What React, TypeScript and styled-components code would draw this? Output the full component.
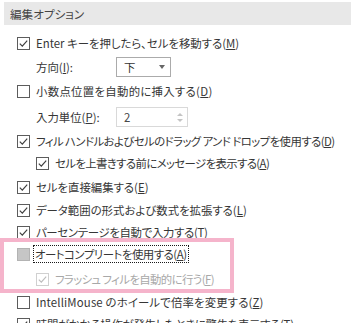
import React from "react";
import styled, { createGlobalStyle, css } from "styled-components";

const GlobalStyle = createGlobalStyle`
  html, body {
    margin: 0;
    padding: 0;
    background: #ffffff;
  }
  body {
    font-family: "Noto Sans CJK JP", "Noto Sans", sans-serif;
    font-feature-settings: "palt";
  }
`;

const Panel = styled.div`
  width: 351px;
  height: 323px;
  overflow: hidden;
  background: #ffffff;
  padding-top: 2px;
  box-sizing: border-box;
`;

// セクションの見出し
const Header = styled.div`
  margin-left: 4px;
  height: 23px;
  background: #e8e8e8;
  color: #444444;
  font-size: 11.6px;
  display: flex;
  align-items: center;
  padding-left: 6px;
`;

const Row = styled.div<{ $indent: number; $top: number }>`
  height: 20px;
  margin-top: ${(p) => p.$top}px;
  padding-left: ${(p) => p.$indent}px;
  display: flex;
  align-items: center;
  font-size: 11.4px;
  color: #363636;
  white-space: nowrap;

  & > svg {
    flex-shrink: 0;
  }
`;

// カタカナの多い行は少し詰める
const Text = styled.span<{
  $disabled?: boolean;
  $focused?: boolean;
  $tracking?: number;
}>`
  margin-left: 6px;
  line-height: 16px;
  letter-spacing: ${(p) => p.$tracking ?? 0}px;
  ${(p) =>
    p.$disabled &&
    css`
      color: #a8a8a8;
    `};
  ${(p) =>
    p.$focused &&
    css`
      outline: 1px dotted #1a1a1a;
      outline-offset: 0px;
      padding: 0 1px 0 1px;
      margin-left: 4px;
    `};
`;

const Label = styled.span`
  width: 80px;
  flex-shrink: 0;
  line-height: 16px;
`;

const Key = styled.span`
  text-decoration: underline;
  text-underline-offset: 1px;
`;

// ピンクの強調枠
const Highlight = styled.div`
  margin-left: 4px;
  width: 226px;
  height: 47px;
  outline: 4px solid #f5b4cb;
  padding-top: 2px;
  box-sizing: border-box;
`;

const Select = styled.div`
  width: 55px;
  height: 20px;
  box-sizing: border-box;
  border: 1px solid #ababab;
  display: flex;
  align-items: center;
  justify-content: space-between;
  padding: 0 5px 0 7px;
  color: #333333;
`;

const Arrow = styled.span`
  width: 0;
  height: 0;
  border-left: 3.5px solid transparent;
  border-right: 3.5px solid transparent;
  border-top: 4px solid #666666;
`;

const Spin = styled.div`
  width: 72px;
  height: 20px;
  box-sizing: border-box;
  border: 1px solid #d9d9d9;
  display: flex;
  align-items: center;
  justify-content: space-between;
  padding: 0 4px 0 7px;
  color: #4a4a4a;
`;

const SpinArrows = styled.div`
  display: flex;
  flex-direction: column;
  gap: 3px;
`;

const SpinArrow = styled.span<{ $up?: boolean }>`
  width: 0;
  height: 0;
  border-left: 3px solid transparent;
  border-right: 3px solid transparent;
  ${(p) =>
    p.$up
      ? css`
          border-bottom: 3px solid #c4c4c4;
        `
      : css`
          border-top: 3px solid #c4c4c4;
        `};
`;

type BoxState = "on" | "off" | "gray" | "disabled";

const CheckBox = ({ state }: { state: BoxState }) => {
  const stroke =
    state === "gray" ? "#b3b3b3" : state === "disabled" ? "#d0d0d0" : "#5c5c5c";
  const fill = state === "gray" ? "#c6c6c6" : "#ffffff";
  return (
    <svg width="13" height="13" viewBox="0 0 13 13">
      <rect x="0.5" y="0.5" width="12" height="12" fill={fill} stroke={stroke} />
      {(state === "on" || state === "disabled") && (
        <path
          d="M2.8 6.6 L5.3 9.1 L10.2 3.6"
          fill="none"
          stroke={state === "disabled" ? "#bdbdbd" : "#3f3f3f"}
          strokeWidth="1.2"
        />
      )}
    </svg>
  );
};

export default function App() {
  return (
    <>
      <GlobalStyle />
      <Panel>
        <Header>編集オプション</Header>

        <Row $indent={17} $top={8}>
          <CheckBox state="on" />
          <Text>
            Enter キーを押したら、セルを移動する(<Key>M</Key>)
          </Text>
        </Row>
        <Row $indent={36} $top={4}>
          <Label>
            方向(<Key>I</Key>):
          </Label>
          <Select>
            下<Arrow />
          </Select>
        </Row>
        <Row $indent={17} $top={4}>
          <CheckBox state="off" />
          <Text $tracking={0.3}>
            小数点位置を自動的に挿入する(<Key>D</Key>)
          </Text>
        </Row>
        <Row $indent={36} $top={6}>
          <Label>
            入力単位(<Key>P</Key>):
          </Label>
          <Spin>
            2
            <SpinArrows>
              <SpinArrow $up />
              <SpinArrow />
            </SpinArrows>
          </Spin>
        </Row>
        <Row $indent={17} $top={4}>
          <CheckBox state="on" />
          <Text $tracking={-0.55}>
            フィル ハンドルおよびセルのドラッグ アンド ドロップを使用する(<Key>D</Key>)
          </Text>
        </Row>
        <Row $indent={36} $top={2}>
          <CheckBox state="on" />
          <Text $tracking={-0.6}>
            セルを上書きする前にメッセージを表示する(<Key>A</Key>)
          </Text>
        </Row>
        <Row $indent={17} $top={4}>
          <CheckBox state="on" />
          <Text>
            セルを直接編集する(<Key>E</Key>)
          </Text>
        </Row>
        <Row $indent={17} $top={3}>
          <CheckBox state="on" />
          <Text>
            データ範囲の形式および数式を拡張する(<Key>L</Key>)
          </Text>
        </Row>
        <Row $indent={17} $top={2}>
          <CheckBox state="on" />
          <Text $tracking={-0.3}>
            パーセンテージを自動で入力する(<Key>T</Key>)
          </Text>
        </Row>

        <Highlight>
          <Row $indent={13} $top={0}>
            <CheckBox state="gray" />
            <Text $focused $tracking={-0.45}>
              オートコンプリートを使用する(<Key>A</Key>)
            </Text>
          </Row>
          <Row $indent={32} $top={5}>
            <CheckBox state="disabled" />
            <Text $disabled $tracking={-0.6}>
              フラッシュ フィルを自動的に行う(<Key>F</Key>)
            </Text>
          </Row>
        </Highlight>

        <Row $indent={17} $top={3}>
          <CheckBox state="off" />
          <Text $tracking={0.15}>
            IntelliMouse のホイールで倍率を変更する(<Key>Z</Key>)
          </Text>
        </Row>
        <Row $indent={17} $top={2}>
          <CheckBox state="on" />
          <Text $tracking={-0.3}>
            時間がかかる操作が発生したときに警告を表示する(<Key>T</Key>)
          </Text>
        </Row>
      </Panel>
    </>
  );
}
